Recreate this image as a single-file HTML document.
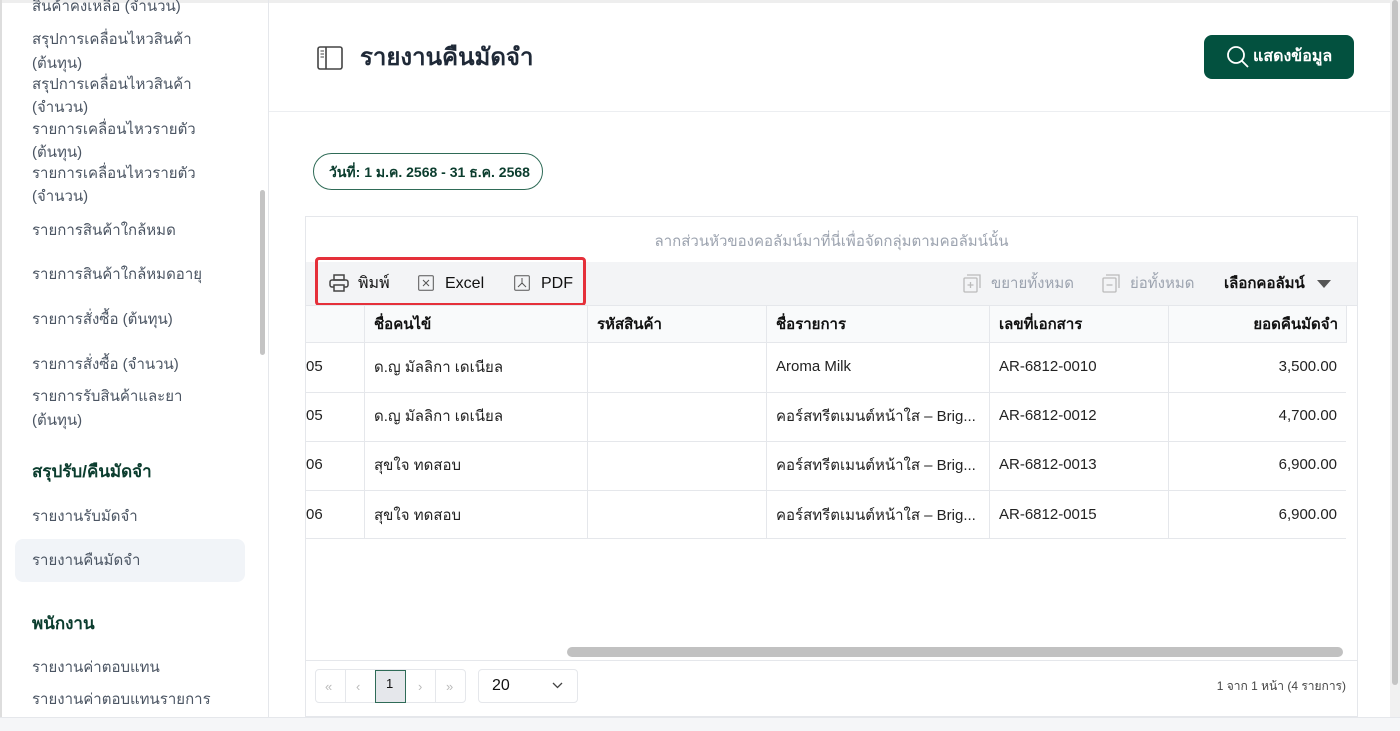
<!DOCTYPE html>
<html><head><meta charset="utf-8"><style>
*{box-sizing:border-box;margin:0;padding:0}
body{width:1400px;height:731px;overflow:hidden;background:#fff;font-family:"Liberation Sans",sans-serif;color:#222;position:relative}
.a{position:absolute;white-space:nowrap;line-height:20px}
.sb{color:#4b5563;font-size:15px}
.sh{color:#0b3d2e;font-size:17px;font-weight:bold}
.th{font-size:15px;font-weight:bold;color:#111}
.td{font-size:15px;color:#222}
.vl{position:absolute;width:1px;background:#e5e7eb}
.hl{position:absolute;height:1px;background:#e5e7eb}
</style></head><body>
<div class="a" style="left:0;top:0;width:1400px;height:3px;background:#eee"></div>
<div class="a" style="left:0;top:0;width:2px;height:717px;background:#ddd"></div>
<div class="a" style="left:268px;top:0;width:1px;height:717px;background:#e5e7eb"></div>
<div class="a" style="left:260px;top:190px;width:5px;height:165px;background:#c4c4c4;border-radius:3px"></div>
<div class="a sb" style="left:32px;top:-3px">สินค้าคงเหลือ (จำนวน)</div>
<div class="a sb" style="left:32px;top:30px">สรุปการเคลื่อนไหวสินค้า</div>
<div class="a sb" style="left:32px;top:54px">(ต้นทุน)</div>
<div class="a sb" style="left:32px;top:75px">สรุปการเคลื่อนไหวสินค้า</div>
<div class="a sb" style="left:32px;top:98px">(จำนวน)</div>
<div class="a sb" style="left:32px;top:120px">รายการเคลื่อนไหวรายตัว</div>
<div class="a sb" style="left:32px;top:143px">(ต้นทุน)</div>
<div class="a sb" style="left:32px;top:164px">รายการเคลื่อนไหวรายตัว</div>
<div class="a sb" style="left:32px;top:187px">(จำนวน)</div>
<div class="a sb" style="left:32px;top:221px">รายการสินค้าใกล้หมด</div>
<div class="a sb" style="left:32px;top:265px">รายการสินค้าใกล้หมดอายุ</div>
<div class="a sb" style="left:32px;top:310px">รายการสั่งซื้อ (ต้นทุน)</div>
<div class="a sb" style="left:32px;top:355px">รายการสั่งซื้อ (จำนวน)</div>
<div class="a sb" style="left:32px;top:387px">รายการรับสินค้าและยา</div>
<div class="a sb" style="left:32px;top:411px">(ต้นทุน)</div>
<div class="a sh" style="left:32px;top:462px">สรุปรับ/คืนมัดจำ</div>
<div class="a sb" style="left:32px;top:507px">รายงานรับมัดจำ</div>
<div class="a" style="left:15px;top:539px;width:230px;height:43px;background:#f1f4f8;border-radius:8px"></div>
<div class="a sb" style="left:32px;top:551px">รายงานคืนมัดจำ</div>
<div class="a sh" style="left:32px;top:614px">พนักงาน</div>
<div class="a sb" style="left:32px;top:658px">รายงานค่าตอบแทน</div>
<div class="a sb" style="left:32px;top:690px">รายงานค่าตอบแทนรายการ</div>
<div class="hl" style="left:269px;top:111px;width:1121px;background:#eceef1"></div>
<svg class="a" style="left:317px;top:46px" width="26" height="24" viewBox="0 0 26 24"><rect x="1" y="1" width="24" height="22" rx="2" fill="none" stroke="#444" stroke-width="1.6"/><line x1="9" y1="1" x2="9" y2="23" stroke="#444" stroke-width="1.6"/><line x1="3.5" y1="5" x2="7" y2="5" stroke="#444"/><line x1="3.5" y1="8" x2="7" y2="8" stroke="#444"/><line x1="3.5" y1="11" x2="7" y2="11" stroke="#444"/></svg>
<div class="a" style="left:360px;top:43px;font-size:24px;line-height:30px;font-weight:bold;color:#1f2937">รายงานคืนมัดจำ</div>
<div class="a" style="left:1204px;top:35px;width:150px;height:44px;background:#03513f;border-radius:8px"></div>
<svg class="a" style="left:1226px;top:45px" width="24" height="24" viewBox="0 0 24 24"><circle cx="10" cy="10" r="8" fill="none" stroke="#fff" stroke-width="1.8"/><line x1="16" y1="16" x2="22" y2="22" stroke="#fff" stroke-width="1.8"/></svg>
<div class="a" style="left:1253px;top:47px;font-size:16px;font-weight:bold;color:#fff">แสดงข้อมูล</div>
<div class="a" style="left:313px;top:153px;width:230px;height:37px;border:1.5px solid #2f6b57;border-radius:19px"></div>
<div class="a" style="left:329px;top:162px;font-size:14px;font-weight:bold;color:#0b3d2e">วันที่: 1 ม.ค. 2568 - 31 ธ.ค. 2568</div>
<div class="a" style="left:305px;top:216px;width:1053px;height:501px;border:1px solid #e5e7eb"></div>
<div class="a" style="left:305px;top:232px;width:1053px;text-align:center;font-size:15px;color:#9ca3af">ลากส่วนหัวของคอลัมน์มาที่นี่เพื่อจัดกลุ่มตามคอลัมน์นั้น</div>
<div class="a" style="left:306px;top:262px;width:1051px;height:43px;background:#f3f4f6"></div>
<div class="a" style="left:315px;top:257px;width:271px;height:49px;border:3px solid #e5303a;border-radius:4px"></div>
<svg class="a" style="left:329px;top:274px" width="20" height="18" viewBox="0 0 20 18"><rect x="5" y="1" width="10" height="5" fill="none" stroke="#444" stroke-width="1.5"/><rect x="1" y="6" width="18" height="7" rx="2" fill="none" stroke="#444" stroke-width="1.5"/><rect x="5" y="11" width="10" height="6" fill="#f3f4f6" stroke="#444" stroke-width="1.5"/></svg>
<div class="a" style="left:358px;top:274px;font-size:16px;color:#111">พิมพ์</div>
<svg class="a" style="left:418px;top:275px" width="16" height="16" viewBox="0 0 16 16"><rect x="0.7" y="0.7" width="14.6" height="14.6" rx="1" fill="none" stroke="#555"/><path d="M5 5l6 6M11 5l-6 6" stroke="#555"/></svg>
<div class="a" style="left:445px;top:274px;font-size:16px;color:#111">Excel</div>
<svg class="a" style="left:514px;top:275px" width="16" height="16" viewBox="0 0 16 16"><rect x="0.7" y="0.7" width="14.6" height="14.6" rx="1" fill="none" stroke="#555"/><path d="M8 3v6M4 12l4-4 4 4" stroke="#555" fill="none"/></svg>
<div class="a" style="left:541px;top:274px;font-size:16px;color:#111">PDF</div>
<svg class="a" style="left:963px;top:274px" width="18" height="19" viewBox="0 0 18 19"><rect x="1" y="4" width="13" height="14" rx="1" fill="none" stroke="#bbb" stroke-width="1.3"/><path d="M4 1h13v13" fill="none" stroke="#bbb" stroke-width="1.3"/><path d="M7.5 8v6M4.5 11h6" stroke="#bbb" stroke-width="1.3"/></svg>
<div class="a" style="left:991px;top:274px;font-size:15px;color:#9ca3af">ขยายทั้งหมด</div>
<svg class="a" style="left:1102px;top:274px" width="18" height="19" viewBox="0 0 18 19"><rect x="1" y="4" width="13" height="14" rx="1" fill="none" stroke="#bbb" stroke-width="1.3"/><path d="M4 1h13v13" fill="none" stroke="#bbb" stroke-width="1.3"/><path d="M4.5 11h6" stroke="#bbb" stroke-width="1.3"/></svg>
<div class="a" style="left:1130px;top:274px;font-size:15px;color:#9ca3af">ย่อทั้งหมด</div>
<div class="a" style="left:1224px;top:274px;font-size:15px;font-weight:bold;color:#111">เลือกคอลัมน์</div>
<svg class="a" style="left:1317px;top:280px" width="14" height="8"><path d="M0 0h14L7 8z" fill="#555"/></svg>
<div class="a" style="left:306px;top:305px;width:1040px;height:38px;background:#f9fafb"></div>
<div class="hl" style="left:306px;top:305px;width:1051px"></div>
<div class="hl" style="left:306px;top:342px;width:1040px"></div>
<div class="a th" style="left:374px;top:315px">ชื่อคนไข้</div>
<div class="a th" style="left:597px;top:315px">รหัสสินค้า</div>
<div class="a th" style="left:776px;top:315px">ชื่อรายการ</div>
<div class="a th" style="left:999px;top:315px">เลขที่เอกสาร</div>
<div class="a th" style="left:1168px;top:315px;width:170px;text-align:right">ยอดคืนมัดจำ</div>
<div class="vl" style="left:364px;top:305px;height:234px"></div>
<div class="vl" style="left:587px;top:305px;height:234px"></div>
<div class="vl" style="left:766px;top:305px;height:234px"></div>
<div class="vl" style="left:989px;top:305px;height:234px"></div>
<div class="vl" style="left:1168px;top:305px;height:234px"></div>
<div class="vl" style="left:1346px;top:305px;height:38px"></div>
<div class="hl" style="left:306px;top:392px;width:1040px"></div>
<div class="hl" style="left:306px;top:441px;width:1040px"></div>
<div class="hl" style="left:306px;top:490px;width:1040px"></div>
<div class="hl" style="left:306px;top:538px;width:1040px"></div>
<div class="a td" style="left:306px;top:357px">05</div><div class="a td" style="left:374px;top:358px">ด.ญ มัลลิกา เดเนียล</div><div class="a td" style="left:776px;top:357px">Aroma Milk</div><div class="a td" style="left:999px;top:357px">AR-6812-0010</div><div class="a td" style="left:1168px;top:357px;width:169px;text-align:right">3,500.00</div>
<div class="a td" style="left:306px;top:406px">05</div><div class="a td" style="left:374px;top:407px">ด.ญ มัลลิกา เดเนียล</div><div class="a td" style="left:776px;top:407px">คอร์สทรีตเมนต์หน้าใส – Brig...</div><div class="a td" style="left:999px;top:406px">AR-6812-0012</div><div class="a td" style="left:1168px;top:406px;width:169px;text-align:right">4,700.00</div>
<div class="a td" style="left:306px;top:455px">06</div><div class="a td" style="left:374px;top:456px">สุขใจ ทดสอบ</div><div class="a td" style="left:776px;top:456px">คอร์สทรีตเมนต์หน้าใส – Brig...</div><div class="a td" style="left:999px;top:455px">AR-6812-0013</div><div class="a td" style="left:1168px;top:455px;width:169px;text-align:right">6,900.00</div>
<div class="a td" style="left:306px;top:505px">06</div><div class="a td" style="left:374px;top:506px">สุขใจ ทดสอบ</div><div class="a td" style="left:776px;top:506px">คอร์สทรีตเมนต์หน้าใส – Brig...</div><div class="a td" style="left:999px;top:505px">AR-6812-0015</div><div class="a td" style="left:1168px;top:505px;width:169px;text-align:right">6,900.00</div>
<div class="a" style="left:567px;top:647px;width:776px;height:10px;background:#c1c1c1;border-radius:5px"></div>
<div class="hl" style="left:306px;top:660px;width:1051px"></div>
<div class="a" style="left:315px;top:669px;width:151px;height:34px;border:1px solid #e5e7eb;border-radius:4px"></div>
<div class="vl" style="left:345px;top:670px;height:32px"></div>
<div class="vl" style="left:435px;top:670px;height:32px"></div>
<div class="a" style="left:375px;top:670px;width:31px;height:33px;background:#e5e7eb;border:1px solid #2f6b57"></div>
<div class="a" style="left:386px;top:674px;font-size:13px;color:#111">1</div>
<div class="a" style="left:325px;top:677px;font-size:13px;color:#bbb">«</div>
<div class="a" style="left:356px;top:677px;font-size:13px;color:#bbb">‹</div>
<div class="a" style="left:418px;top:677px;font-size:13px;color:#bbb">›</div>
<div class="a" style="left:446px;top:677px;font-size:13px;color:#bbb">»</div>
<div class="a" style="left:478px;top:669px;width:100px;height:34px;border:1px solid #e5e7eb;border-radius:4px"></div>
<div class="a" style="left:492px;top:676px;font-size:16px;color:#111">20</div>
<svg class="a" style="left:552px;top:682px" width="11" height="7"><path d="M1 1l4.5 4.5L10 1" fill="none" stroke="#444" stroke-width="1.3"/></svg>
<div class="a" style="left:1150px;top:676px;width:196px;text-align:right;font-size:12px;color:#444">1 จาก 1 หน้า (4 รายการ)</div>
<div class="a" style="left:1390px;top:0;width:10px;height:717px;background:#f1f1f1"></div>
<div class="a" style="left:1392px;top:0;width:6px;height:685px;background:#c4c4c4;border-radius:3px"></div>
<div class="a" style="left:0;top:717px;width:1400px;height:14px;background:#f5f6f8;border-top:1px solid #e5e7eb"></div>
</body></html>
